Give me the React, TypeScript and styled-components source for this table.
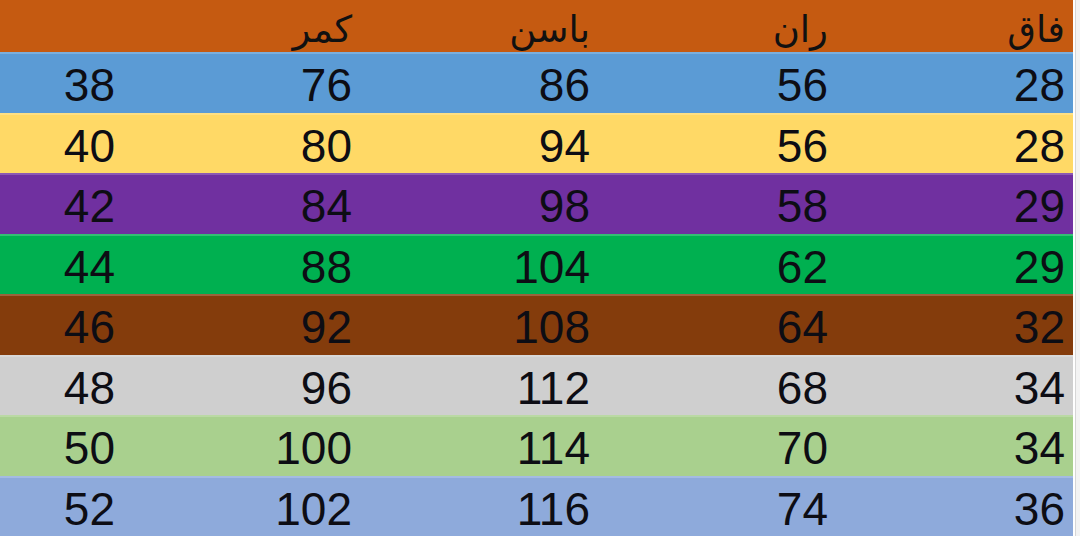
import React from 'react';
import styled, { createGlobalStyle } from 'styled-components';

const GlobalStyle = createGlobalStyle`
  html, body {
    margin: 0;
    padding: 0;
    background: #ffffff;
    overflow: hidden;
  }
  #root {
    width: 1080px;
    height: 536px;
  }
`;

const headers = ['', 'كمر', 'باسن', 'ران', 'فاق'];

const rows: { color: string; values: number[] }[] = [
  { color: '#5b9bd5', values: [38, 76, 86, 56, 28] },
  { color: '#ffd966', values: [40, 80, 94, 56, 28] },
  { color: '#7030a0', values: [42, 84, 98, 58, 29] },
  { color: '#00b050', values: [44, 88, 104, 62, 29] },
  { color: '#843c0c', values: [46, 92, 108, 64, 32] },
  { color: '#cfcfcf', values: [48, 96, 112, 68, 34] },
  { color: '#a9d08e', values: [50, 100, 114, 70, 34] },
  { color: '#8eaadb', values: [52, 102, 116, 74, 36] },
];

const Page = styled.div`
  display: flex;
  width: 1080px;
  height: 536px;
`;

const Sheet = styled.div`
  width: 1073px;
  display: grid;
  grid-template-rows: 52px repeat(8, 1fr);
`;

const Edge = styled.div`
  flex: 1;
  background: #f3f3f3;
  border-left: 2px solid #ffffff;
  box-shadow: inset 1px 0 0 #d6d6d6;
`;

const Row = styled.div<{ $bg: string; $header?: boolean }>`
  display: grid;
  grid-template-columns: 123px 237px 238px 238px 237px;
  background: ${p => p.$bg};
  border-top: ${p => (p.$header ? 'none' : '2px solid rgba(255, 255, 255, 0.2)')};
`;

const Cell = styled.div`
  display: flex;
  align-items: center;
  justify-content: flex-end;
  padding: 4px 8px 0 0;
  font-family: 'Liberation Sans', Arial, sans-serif;
  font-size: 46px;
  color: #0d0d14;
  line-height: 1;
`;

const HeadCell = styled.div`
  display: flex;
  align-items: flex-end;
  justify-content: flex-end;
  padding: 0 8px 4px 0;
  font-family: 'DejaVu Sans', 'Noto Sans', sans-serif;
  font-size: 37px;
  color: #111111;
  line-height: 1;
`;

export default function App() {
  return (
    <>
      <GlobalStyle />
      <Page>
        <Sheet>
          <Row $bg="#c55a11" $header>
            {headers.map((h, i) => (
              <HeadCell key={i}>
                <span dir="rtl">{h}</span>
              </HeadCell>
            ))}
          </Row>
          {rows.map((r, i) => (
            <Row key={i} $bg={r.color}>
              {r.values.map((v, j) => (
                <Cell key={j}>{v}</Cell>
              ))}
            </Row>
          ))}
        </Sheet>
        <Edge />
      </Page>
    </>
  );
}
